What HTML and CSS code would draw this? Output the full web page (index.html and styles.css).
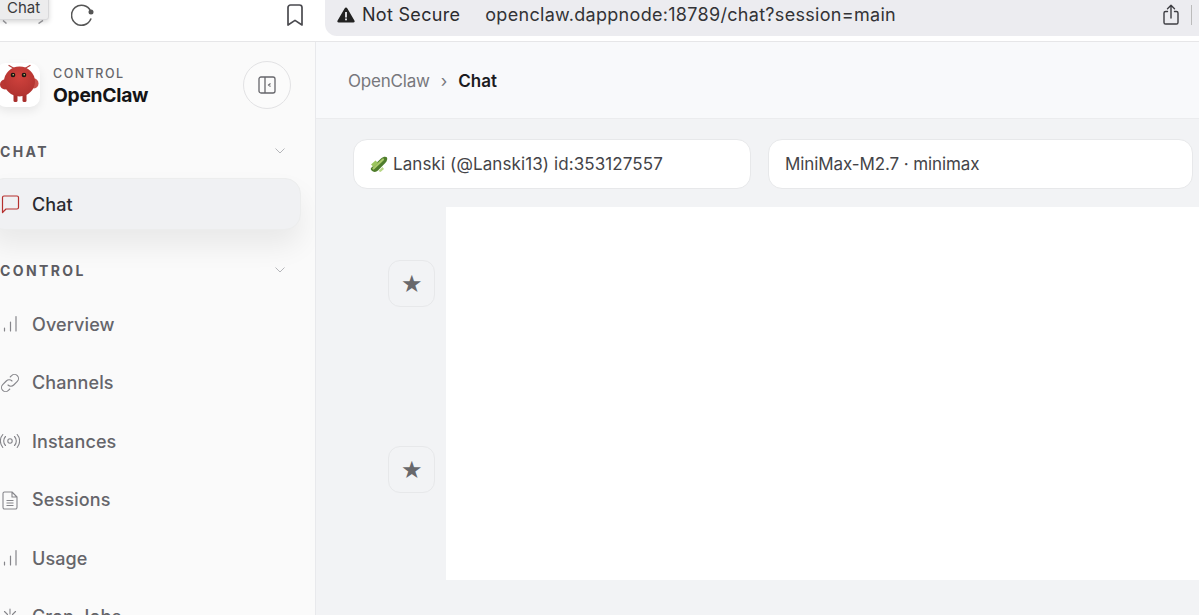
FILE: index.html
```html
<!DOCTYPE html>
<html lang="en">
<head>
<meta charset="utf-8">
<title>OpenClaw Chat</title>
<link rel="stylesheet" href="styles.css">
</head>
<body>
<header class="browser">
  <div class="tooltip">Chat</div>
  <div class="nav-arrows">
    <svg viewBox="0 0 46 4" width="46" height="4"><path d="M3 .5 6.500 3.500M43 .5 38.500 3.500" stroke="#9a9a9e" stroke-width="1.500" fill="none"/></svg>
  </div>
  <svg class="reload" viewBox="0 0 24 24" width="24" height="24"><path d="M19.600 9A10 10 0 1 0 19.800 17" fill="none" stroke="#555" stroke-width="1.600" stroke-linecap="round"/><circle cx="20" cy="10" r="2.500" fill="#555"/></svg>
  <svg class="bookmark" viewBox="0 0 18 24" width="18" height="24"><path d="M2 4.500A2.500 2.500 0 0 1 4.500 2h9A2.500 2.500 0 0 1 16 4.500V22l-7-4.600L2 22z" fill="none" stroke="#4a4a4f" stroke-width="1.700" stroke-linejoin="round"/></svg>
  <div class="address">
    <svg class="warn" viewBox="0 0 18 16" width="18" height="16"><path d="M9 .6c.6 0 1 .3 1.400 1l7 12c.6 1.100.1 2-1.100 2H1.700c-1.200 0-1.700-.9-1.100-2l7-12c.4-.7.8-1 1.400-1z" fill="#222"/><rect x="8.100" y="5" width="1.800" height="5.500" fill="#ececf0"/><rect x="8.100" y="11.500" width="1.800" height="1.800" fill="#ececf0"/></svg>
    <span class="secure">Not Secure</span>
    <span class="url">openclaw.dappnode:18789/chat?session=main</span>
    <svg class="share" viewBox="0 0 18 24" width="18" height="24"><path d="M5.500 8.500H3.600A1.600 1.600 0 0 0 2 10.100v9.300A1.600 1.600 0 0 0 3.600 21h10.800a1.600 1.600 0 0 0 1.600-1.600v-9.300a1.600 1.600 0 0 0-1.600-1.600h-1.900M9 15V2.500M5.500 5.800 9 2.300l3.500 3.500" fill="none" stroke="#3d3d42" stroke-width="1.400" stroke-linecap="round" stroke-linejoin="round"/></svg>
    <span class="divider"></span>
  </div>
</header>
<div class="app">
  <aside class="sidebar">
    <div class="brand">
      <div class="logo">
        <svg viewBox="0 0 44 44" width="44" height="44">
          <defs><radialGradient id="body" cx=".5" cy=".35" r=".75"><stop offset="0" stop-color="#d0423d"/><stop offset="1" stop-color="#ab302d"/></radialGradient></defs>
          <path d="M19 6 13 2.500M28 6l6-3.500" stroke="#b5433f" stroke-width="1.300" fill="none" stroke-linecap="round"/>
          <ellipse cx="9" cy="21.500" rx="5" ry="5" fill="#b93632"/>
          <ellipse cx="38" cy="20.500" rx="4.500" ry="5" fill="#c9534d"/>
          <rect x="17.500" y="30" width="4" height="9" rx="1.500" fill="#a92f2c"/>
          <rect x="26.500" y="30" width="4" height="9" rx="1.500" fill="#a92f2c"/>
          <ellipse cx="23.500" cy="18.500" rx="15.500" ry="15" fill="url(#body)"/>
          <circle cx="17" cy="12" r="2.300" fill="#1b1512"/>
          <circle cx="28" cy="12" r="2.300" fill="#1b1512"/>
          <circle cx="17.200" cy="11.700" r=".8" fill="#d9d07a"/>
          <circle cx="28.200" cy="11.700" r=".8" fill="#d9d07a"/>
        </svg>
      </div>
      <div class="brand-text">
        <span class="eyebrow">CONTROL</span>
        <strong class="brand-name">OpenClaw</strong>
      </div>
      <button class="collapse" type="button" aria-label="Collapse sidebar">
        <svg viewBox="0 0 18 18" width="18" height="18"><rect x="1" y="1" width="16" height="16" rx="2" fill="none" stroke="#66666b" stroke-width="1.300"/><path d="M7 1v16" stroke="#66666b" stroke-width="1.300"/><path d="M12.500 7.500 10.500 9l2 1.500" fill="none" stroke="#66666b" stroke-width="1.100"/></svg>
      </button>
    </div>
    <div class="group-head first"><span>CHAT</span><svg class="chev" viewBox="0 0 12 8" width="12" height="8"><path d="M1.500 1.500 6 6l4.500-4.500" fill="none" stroke="#b5b6ba" stroke-width="1"/></svg></div>
    <a class="item active">
      <svg viewBox="0 0 20 20" width="20" height="20"><path d="M2.500 3.500A1.500 1.500 0 0 1 4 2h13a1.500 1.500 0 0 1 1.500 1.500v10A1.500 1.500 0 0 1 17 15H6l-3.500 3.500z" fill="none" stroke="#b5302e" stroke-width="1.200" stroke-linejoin="round"/></svg>
      <span>Chat</span>
    </a>
    <div class="group-head second"><span>CONTROL</span><svg class="chev" viewBox="0 0 12 8" width="12" height="8"><path d="M1.500 1.500 6 6l4.500-4.500" fill="none" stroke="#b5b6ba" stroke-width="1"/></svg></div>
    <a class="item">
      <svg viewBox="0 0 20 20" width="20" height="20"><path d="M4.500 17v-3M10.500 17V8M16 17V2.500" stroke="#85858a" stroke-width="1.200" fill="none" stroke-linecap="round"/></svg>
      <span>Overview</span>
    </a>
    <a class="item">
      <svg viewBox="0 0 20 20" width="20" height="20"><path d="M8 12a4 4 0 0 0 5.700 0l3.600-3.600a4 4 0 0 0-5.700-5.700L10.200 4M12 8a4 4 0 0 0-5.700 0l-3.600 3.600a4 4 0 0 0 5.700 5.700L9.800 16" stroke="#85858a" stroke-width="1.100" fill="none" stroke-linecap="round"/></svg>
      <span>Channels</span>
    </a>
    <a class="item">
      <svg viewBox="0 0 20 20" width="20" height="20"><circle cx="10" cy="10" r="2.200" fill="none" stroke="#85858a" stroke-width="1.100"/><path d="M5.500 5.500a6.500 6.500 0 0 0 0 9M14.500 5.500a6.500 6.500 0 0 1 0 9M2.800 3.500a10 10 0 0 0 0 13M17.200 3.500a10 10 0 0 1 0 13" fill="none" stroke="#85858a" stroke-width="1.100" stroke-linecap="round"/></svg>
      <span>Instances</span>
    </a>
    <a class="item">
      <svg viewBox="0 0 20 20" width="20" height="20"><path d="M3 3.500A1.500 1.500 0 0 1 4.500 2H12l5 5v10.500a1.500 1.500 0 0 1-1.500 1.500h-11A1.500 1.500 0 0 1 3 17.500zM12 2v5h5M6.500 10.500h7M6.500 13h7M6.500 15.500h7" fill="none" stroke="#85858a" stroke-width="1.100" stroke-linejoin="round"/></svg>
      <span>Sessions</span>
    </a>
    <a class="item">
      <svg viewBox="0 0 20 20" width="20" height="20"><path d="M4.500 17v-3M10.500 17V8M16 17V2.500" stroke="#85858a" stroke-width="1.200" fill="none" stroke-linecap="round"/></svg>
      <span>Usage</span>
    </a>
    <a class="item">
      <svg viewBox="0 0 20 20" width="20" height="20"><path d="M10 2v5M10 13v5M2 10h5M13 10h5M4.500 4.500l3 3M15.500 4.500l-3 3M4.500 15.500l3-3M15.500 15.500l-3-3" stroke="#85858a" stroke-width="1.100" fill="none" stroke-linecap="round"/></svg>
      <span>Cron Jobs</span>
    </a>
  </aside>
  <main class="main">
    <div class="topbar">
      <span class="crumb">OpenClaw</span>
      <span class="sep">›</span>
      <strong class="current">Chat</strong>
    </div>
    <div class="content">
      <div class="selectors">
        <div class="select session">
          <svg class="cuke" viewBox="0 0 18 18" width="18" height="18">
            <path d="M1 13 11 3.500c2-1.800 4.500-2.300 5.800-1.200 1 1.200.3 3.800-1.300 5.500L8 15.500c-1.500 1.500-3.500 1.700-5 1-1.500-.8-2.800-2.200-2-3.500z" fill="#4f7d2c"/>
            <path d="M3.500 13.500 13 4.500" stroke="#a9c96b" stroke-width="2.200" stroke-linecap="round"/>
            <path d="M1 9.500 5.500 5.500 8 8l-4.500 4z" fill="#9cc65f"/>
            <path d="M8.500 16 12.500 12l1.500 2-3.500 3z" fill="#b7d685"/>
          </svg>
          <span>Lanski (@Lanski13) id:353127557</span>
        </div>
        <div class="select model"><span>MiniMax-M2.7 · minimax</span></div>
      </div>
      <div class="chat">
        <div class="stars">
          <button class="star" type="button">★</button>
          <button class="star" type="button">★</button>
        </div>
        <div class="panel"></div>
      </div>
    </div>
  </main>
</div>
</body>
</html>
```
FILE: styles.css
```css
* { box-sizing: border-box; }
html, body { margin: 0; height: 100%; }
body {
  width: 1199px;
  height: 615px;
  overflow: hidden;
  display: flex;
  flex-direction: column;
  font-family: Inter, "Liberation Sans", sans-serif;
  background: #fff;
  color: #222;
}
.browser {
  position: relative;
  flex: 0 0 42px;
  display: flex;
  align-items: flex-start;
  background: #fff;
  border-bottom: 1px solid #e6e6e8;
}
.tooltip {
  position: absolute;
  left: -3px;
  top: -6px;
  width: 52px;
  height: 26px;
  padding: 3px 0 0 9px;
  font-size: 15px;
  line-height: 20px;
  color: #3a3a3c;
  background: #ececed;
  border: 1px solid #d8d8da;
  border-radius: 3px;
  box-shadow: 0 2px 5px rgba(0,0,0,.16);
}
.nav-arrows { width: 71px; flex: none; padding-top: 20px; }
.nav-arrows svg { display: block; }
.reload { flex: none; margin-top: 2px; }
.bookmark { flex: none; margin: 3px 0 0 191px; }
.address {
  flex: none;
  width: 877px;
  height: 36px;
  margin-left: 21px;
  padding: 0 0 7px 12px;
  display: flex;
  align-items: center;
  background: #ececf0;
  border-radius: 0 0 0 12px;
  font-size: 18px;
  letter-spacing: .3px;
}
.warn { flex: none; }
.secure { margin-left: 7px; color: #2b2b2e; }
.url { margin-left: 25px; color: #333336; }
.share { margin-left: 266px; flex: none; }
.divider { width: 1px; height: 20px; margin-left: 11px; background: #bbb; }

.app { flex: 1; display: flex; min-height: 0; }
.sidebar {
  flex: 0 0 316px;
  background: #fafafa;
  border-right: 1px solid #e8e9ec;
  overflow: hidden;
  padding-right: 14px;
}
.brand { display: flex; align-items: center; height: 86px; }
.logo {
  flex: none;
  width: 44px;
  height: 44px;
  margin-left: -4px;
  background: #fff;
  border-radius: 10px;
  box-shadow: 0 4px 10px rgba(0,0,0,.08);
}
.logo svg { display: block; }
.brand-text { display: flex; flex-direction: column; margin: 3px 0 0 13px; }
.eyebrow { font-size: 12.500px; line-height: 16px; letter-spacing: 1.500px; color: #66666b; font-weight: 500; }
.brand-name { font-size: 19.300px; line-height: 26px; font-weight: 700; color: #141416; letter-spacing: -.3px; }
.collapse {
  flex: none;
  width: 48px;
  height: 48px;
  margin-left: auto;
  margin-right: 10px;
  display: flex;
  align-items: center;
  justify-content: center;
  padding: 0;
  background: #fbfbfb;
  border: 1px solid #e2e2e4;
  border-radius: 50%;
}
.group-head {
  display: flex;
  align-items: center;
  justify-content: space-between;
  height: 20px;
  padding: 0 15px 0 0;
  font-size: 14px;
  font-weight: 700;
  letter-spacing: 2.400px;
  color: #5c5c62;
}
.group-head.first { margin-top: 13px; }
.group-head.second { margin-top: 30px; margin-bottom: 15px; }
.chev { flex: none; }
.item {
  display: flex;
  align-items: center;
  gap: 12px;
  height: 58.500px;
  margin-left: -12px;
  padding-left: 12px;
  font-size: 18px;
  font-weight: 500;
  letter-spacing: .12px;
  color: #65656a;
}
.item svg { flex: none; }
.item.active {
  height: 52px;
  margin-top: 17px;
  padding-left: 11px;
  border: 1px solid #eceded;
  border-radius: 16px;
  background: #f0f1f3;
  color: #2a2a30;
  box-shadow: 0 16px 28px rgba(0,0,0,.07);
}

.main { flex: 1; min-width: 0; display: flex; flex-direction: column; }
.topbar {
  flex: 0 0 77px;
  display: flex;
  align-items: center;
  padding: 2px 0 0 32px;
  font-size: 17px;
  background: #f8f9fb;
  border-bottom: 1px solid #ebecee;
}
.crumb { color: #77777c; letter-spacing: -.2px; }
.sep { margin: 0 11px; color: #77777c; }
.current { font-weight: 600; color: #1b1b1f; }
.content { flex: 1; background: #f2f3f5; padding: 20px 0 0 37px; }
.selectors { display: flex; gap: 17px; }
.select {
  height: 50px;
  display: flex;
  align-items: center;
  background: #fff;
  border: 1px solid #e7e8ea;
  border-radius: 14px;
  font-size: 17px;
  color: #444448;
}
.session { width: 398px; padding-left: 16px; letter-spacing: .1px; }
.model { width: 425px; padding-left: 16px; letter-spacing: -.1px; }
.cuke { flex: none; margin-right: 5px; }
.chat { display: flex; margin-top: 18px; margin-left: 35px; }
.stars {
  flex: 0 0 47px;
  display: flex;
  flex-direction: column;
  gap: 139px;
  padding-top: 53px;
}
.star {
  width: 47px;
  height: 47px;
  padding: 0;
  font-size: 24px;
  line-height: 1;
  color: #68686c;
  background: #f2f3f5;
  border: 1px solid #e7e8ea;
  border-radius: 12px;
}
.panel { width: 753px; height: 373px; margin-left: 11px; background: #fff; }
```
